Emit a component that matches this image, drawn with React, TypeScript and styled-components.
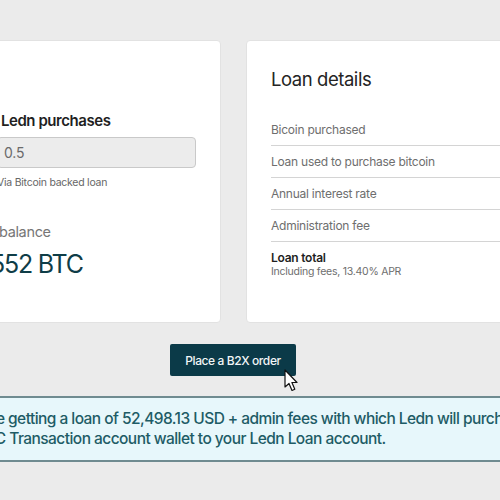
import React from 'react';
import styled, { createGlobalStyle } from 'styled-components';

const GlobalStyle = createGlobalStyle`
    html, body {
        margin: 0;
        padding: 0;
        background: #ebebeb;
    }
    * {
        box-sizing: border-box;
    }
`;

const Viewport = styled.div`
    width: 500px;
    height: 500px;
    overflow: hidden;
    background: #ebebeb;
    font-family: Inter, 'Liberation Sans', sans-serif;
`;

const Canvas = styled.div`
    width: 640px;
    margin-left: -60px;
    padding-top: 40px;
    display: flex;
    flex-direction: column;
`;

const Cards = styled.div`
    display: grid;
    grid-template-columns: 249px 300px;
    gap: 25px;
    padding-left: 32px;
`;

const Card = styled.div`
    height: 283px;
    background: #ffffff;
    border: 1px solid #e2e2e2;
    border-radius: 4px;
    padding: 0 24px;
    display: flex;
    flex-direction: column;
`;

const FieldLabel = styled.div`
    margin-top: 70px;
    padding-left: 4px;
    font-size: 15px;
    font-weight: 600;
    letter-spacing: -0.45px;
    color: #1f1f1f;
    line-height: 20px;
`;

const InputBox = styled.div`
    margin-top: 6px;
    height: 31px;
    background: #ececec;
    border: 1px solid #c9c9c9;
    border-radius: 4px;
    padding-left: 6px;
    display: flex;
    align-items: center;
    font-size: 14px;
    letter-spacing: -0.2px;
    color: #6a6a6a;
`;

const Helper = styled.div`
    margin-top: 8px;
    font-size: 10.5px;
    letter-spacing: -0.25px;
    color: #666;
    line-height: 14px;
`;

const BalanceLabel = styled.div`
    margin-top: 32px;
    padding-left: 2px;
    font-size: 14.5px;
    letter-spacing: -0.35px;
    color: #767676;
    line-height: 20px;
`;

const BalanceValue = styled.div`
    margin-top: 6px;
    margin-left: -7px;
    font-size: 25px;
    letter-spacing: -1.2px;
    color: #0f3d47;
    line-height: 32px;
`;

const Heading = styled.div`
    margin-top: 26px;
    font-size: 18.5px;
    letter-spacing: -0.45px;
    color: #242424;
    line-height: 24px;
`;

const Rows = styled.div`
    margin-top: 23px;
    display: flex;
    flex-direction: column;
`;

interface IRowProps {
    last?: boolean;
}

const Row = styled.div<IRowProps>`
    padding: 8px 0 ${(p) => (p.last ? '0' : '8px')};
    border-bottom: ${(p) => (p.last ? 'none' : '1px solid #d4d4d4')};
    font-size: 12px;
    letter-spacing: -0.25px;
    line-height: 15px;
    color: #6e6e6e;
`;

const RowStrong = styled.div`
    font-size: 12px;
    font-weight: 600;
    color: #1f1f1f;
    line-height: 15px;
`;

const RowSub = styled.div`
    font-size: 10.5px;
    color: #6e6e6e;
    line-height: 14px;
`;

const Actions = styled.div`
    margin-top: 21px;
    padding-left: 230px;
    display: flex;
`;

const ButtonWrap = styled.div`
    position: relative;
`;

const Button = styled.button`
    width: 126px;
    height: 32px;
    border: none;
    border-radius: 2px;
    background: #0b3a48;
    color: #f2f6f7;
    font-family: Inter, 'Liberation Sans', sans-serif;
    font-size: 12px;
    font-weight: 500;
    letter-spacing: -0.4px;
    cursor: pointer;
`;

const Cursor = styled.svg`
    position: absolute;
    left: 114px;
    top: 25px;
`;

const Banner = styled.div`
    margin-top: 20px;
    background: #e7f7fb;
    border-top: 2px solid #6f8b90;
    border-bottom: 2px solid #6f8b90;
    padding: 11px 0 11px 20px;
    font-size: 15.5px;
    font-weight: 500;
    letter-spacing: -0.55px;
    line-height: 20px;
    color: #1e5c66;
    white-space: nowrap;
`;

export default function App() {
    return (
        <Viewport>
            <GlobalStyle />
            <Canvas>
                <Cards>
                    <Card>
                        <FieldLabel>Ledn purchases</FieldLabel>
                        <InputBox>0.5</InputBox>
                        <Helper>Via Bitcoin backed loan</Helper>
                        <BalanceLabel>balance</BalanceLabel>
                        <BalanceValue>552 BTC</BalanceValue>
                    </Card>
                    <Card>
                        <Heading>Loan details</Heading>
                        <Rows>
                            {ROWS.map((label) => (
                                <Row key={label}>{label}</Row>
                            ))}
                            <Row last>
                                <RowStrong>Loan total</RowStrong>
                                <RowSub>Including fees, 13.40% APR</RowSub>
                            </Row>
                        </Rows>
                    </Card>
                </Cards>
                <Actions>
                    <ButtonWrap>
                        <Button>Place a B2X order</Button>
                        <Cursor width="16" height="24" viewBox="0 0 16 24">
                            <path
                                d="M1 1 L1 18 L5 14.5 L8 21.5 L10.8 20.3 L7.9 13.5 L13 13.5 Z"
                                fill="#ffffff"
                                stroke="#111111"
                                strokeWidth="1.2"
                                strokeLinejoin="round"
                            />
                        </Cursor>
                    </ButtonWrap>
                </Actions>
                <Banner>
                    You're getting a loan of 52,498.13 USD + admin fees with which Ledn will purchase 0.5 BTC
                    <br />to BTC Transaction account wallet to your Ledn Loan account.
                </Banner>
            </Canvas>
        </Viewport>
    );
}

const ROWS = [
    'Bicoin purchased',
    'Loan used to purchase bitcoin',
    'Annual interest rate',
    'Administration fee',
];
